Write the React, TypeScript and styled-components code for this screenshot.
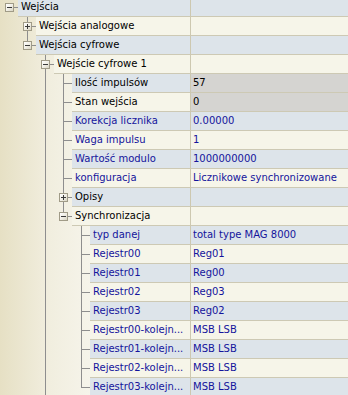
import React from 'react';
import styled, { createGlobalStyle, css } from 'styled-components';

type Line = 'none' | 'through' | 'tee' | 'end' | 'root';

interface Node {
  label: string;
  value?: string;
  level: number;
  guides: boolean[];
  conn: Line;
  toggle?: 'open' | 'closed';
  nameBlue?: boolean;
  valueBlue?: boolean;
  readOnly?: boolean;
}

const LINE = '#8e8e8e';
const BLUE = '#14149c';

const Global = createGlobalStyle`
  html, body { margin: 0; padding: 0; }
  body {
    font-family: "DejaVu Sans", Tahoma, Verdana, sans-serif;
    font-size: 10px;
    background: #f6f4ea;
  }
`;

const Frame = styled.div`
  width: 348px;
  height: 395px;
  overflow: hidden;
  background: linear-gradient(to right, #e6e0c4 0px, #f1eedf 50px, #f8f7f0 110px);
`;

const List = styled.div`
  margin-top: -2px;
`;

const Row = styled.div`
  display: flex;
  height: 19px;
`;

const Gutter = styled.div`
  display: flex;
  flex: none;
`;

const LevelCol = styled.div<{ $line: Line }>`
  position: relative;
  width: 18px;
  height: 19px;
  flex: none;
  ${(p) =>
    (p.$line === 'through' || p.$line === 'tee') &&
    css`
      &::before {
        content: '';
        position: absolute;
        left: 9px;
        top: 0;
        width: 1px;
        height: 19px;
        background: ${LINE};
      }
    `}
  ${(p) =>
    p.$line === 'end' &&
    css`
      &::before {
        content: '';
        position: absolute;
        left: 9px;
        top: 0;
        width: 1px;
        height: 10px;
        background: ${LINE};
      }
    `}
  ${(p) =>
    (p.$line === 'tee' || p.$line === 'end' || p.$line === 'root') &&
    css`
      &::after {
        content: '';
        position: absolute;
        left: 9px;
        top: 9px;
        width: 9px;
        height: 1px;
        background: ${LINE};
      }
    `}
`;

const Toggle = styled.span<{ $open: boolean }>`
  position: absolute;
  z-index: 1;
  left: 5px;
  top: 5px;
  width: 9px;
  height: 9px;
  box-sizing: border-box;
  border: 1px solid #a09b87;
  background: linear-gradient(135deg, #ffffff 0%, #f1efe6 50%, #d9d5c4 100%);
  &::before {
    content: '';
    position: absolute;
    left: 1px;
    top: 3px;
    width: 5px;
    height: 1px;
    background: #3a3a3a;
  }
  ${(p) =>
    !p.$open &&
    css`
      &::after {
        content: '';
        position: absolute;
        left: 3px;
        top: 1px;
        width: 1px;
        height: 5px;
        background: #3a3a3a;
      }
    `}
`;

const rowBg = (i: number) => (i % 2 === 0 ? '#dde4ea' : '#f6f5e9');

const NameCell = styled.div<{ $level: number; $index: number; $blue: boolean }>`
  flex: none;
  box-sizing: border-box;
  width: ${(p) => 191 - 18 * (p.$level + 1)}px;
  height: 19px;
  padding-left: 3px;
  line-height: 18px;
  border-bottom: 1px solid #cdc9b4;
  border-right: 1px solid #cdc8b0;
  background: ${(p) => rowBg(p.$index)};
  color: ${(p) => (p.$blue ? BLUE : '#000')};
  white-space: nowrap;
  overflow: hidden;
`;

const ValueCell = styled.div<{ $index: number; $blue: boolean; $readOnly: boolean }>`
  flex: 1;
  box-sizing: border-box;
  height: 19px;
  padding-left: 2px;
  line-height: 18px;
  border-bottom: 1px solid #cdc9b4;
  background: ${(p) => (p.$readOnly ? '#d5d4d1' : rowBg(p.$index))};
  color: ${(p) => (p.$blue ? BLUE : '#000')};
  white-space: nowrap;
  overflow: hidden;
`;

const L3 = [false, false, true];
const L4 = [false, false, true, false];

const nodes: Node[] = [
  { label: 'Wejścia', level: 0, guides: [], conn: 'root', toggle: 'open' },
  { label: 'Wejścia analogowe', level: 1, guides: [false], conn: 'tee', toggle: 'closed' },
  { label: 'Wejścia cyfrowe', level: 1, guides: [false], conn: 'end', toggle: 'open' },
  { label: 'Wejście cyfrowe 1', level: 2, guides: [false, false], conn: 'tee', toggle: 'open' },
  { label: 'Ilość impulsów', value: '57', level: 3, guides: L3, conn: 'tee', readOnly: true },
  { label: 'Stan wejścia', value: '0', level: 3, guides: L3, conn: 'tee', readOnly: true },
  { label: 'Korekcja licznika', value: '0.00000', level: 3, guides: L3, conn: 'tee', nameBlue: true, valueBlue: true },
  { label: 'Waga impulsu', value: '1', level: 3, guides: L3, conn: 'tee', nameBlue: true, valueBlue: true },
  { label: 'Wartość modulo', value: '1000000000', level: 3, guides: L3, conn: 'tee', nameBlue: true, valueBlue: true },
  { label: 'konfiguracja', value: 'Licznikowe synchronizowane', level: 3, guides: L3, conn: 'tee', nameBlue: true, valueBlue: true },
  { label: 'Opisy', level: 3, guides: L3, conn: 'tee', toggle: 'closed' },
  { label: 'Synchronizacja', level: 3, guides: L3, conn: 'end', toggle: 'open' },
  { label: 'typ danej', value: 'total type MAG 8000', level: 4, guides: L4, conn: 'tee', nameBlue: true, valueBlue: true },
  { label: 'Rejestr00', value: 'Reg01', level: 4, guides: L4, conn: 'tee', nameBlue: true, valueBlue: true },
  { label: 'Rejestr01', value: 'Reg00', level: 4, guides: L4, conn: 'tee', nameBlue: true, valueBlue: true },
  { label: 'Rejestr02', value: 'Reg03', level: 4, guides: L4, conn: 'tee', nameBlue: true, valueBlue: true },
  { label: 'Rejestr03', value: 'Reg02', level: 4, guides: L4, conn: 'tee', nameBlue: true, valueBlue: true },
  { label: 'Rejestr00-kolejn...', value: 'MSB LSB', level: 4, guides: L4, conn: 'tee', nameBlue: true, valueBlue: true },
  { label: 'Rejestr01-kolejn...', value: 'MSB LSB', level: 4, guides: L4, conn: 'tee', nameBlue: true, valueBlue: true },
  { label: 'Rejestr02-kolejn...', value: 'MSB LSB', level: 4, guides: L4, conn: 'tee', nameBlue: true, valueBlue: true },
  { label: 'Rejestr03-kolejn...', value: 'MSB LSB', level: 4, guides: L4, conn: 'end', nameBlue: true, valueBlue: true },
];

export default function App() {
  return (
    <>
      <Global />
      <Frame>
        <List>
          {nodes.map((n, i) => (
            <Row key={i}>
              <Gutter>
                {n.guides.map((g, k) => (
                  <LevelCol key={k} $line={g ? 'through' : 'none'} />
                ))}
                <LevelCol $line={n.conn}>
                  {n.toggle && <Toggle $open={n.toggle === 'open'} />}
                </LevelCol>
              </Gutter>
              <NameCell $level={n.level} $index={i} $blue={!!n.nameBlue}>
                {n.label}
              </NameCell>
              <ValueCell $index={i} $blue={!!n.valueBlue} $readOnly={!!n.readOnly}>
                {n.value ?? ''}
              </ValueCell>
            </Row>
          ))}
        </List>
      </Frame>
    </>
  );
}
